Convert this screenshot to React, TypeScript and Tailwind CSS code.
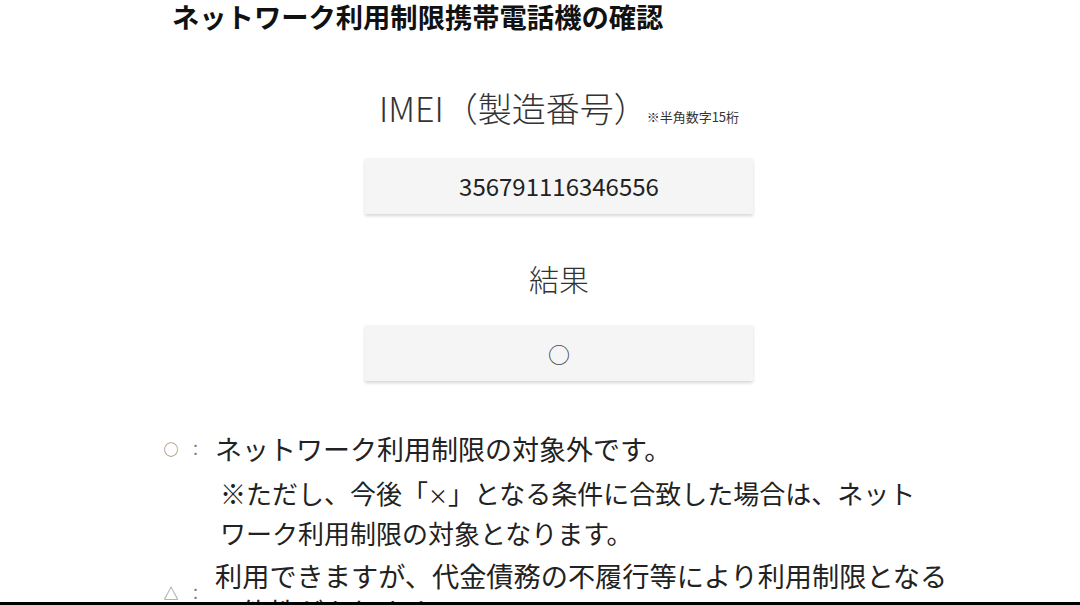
const jp = "font-['Noto_Sans_CJK_JP','Noto_Sans',sans-serif]";

function Field({ children }: { children: React.ReactNode }) {
  return (
    <div className="mx-auto flex h-[56px] w-[388px] items-center justify-center bg-[#f5f5f5] shadow-[0_2px_3px_rgba(0,0,0,0.16)]">
      {children}
    </div>
  );
}

function Mark({ sign }: { sign: string }) {
  return (
    <span className="flex w-[52px] shrink-0 items-center text-[15px] text-[#777]">
      <span className="w-[16px] text-center">{sign}</span>
      <span className="ml-[9px]">：</span>
    </span>
  );
}

export default function App() {
  return (
    <div className={`relative h-[605px] w-[1080px] overflow-hidden bg-white ${jp}`}>
      <div className="ml-[163px] w-[792px]">
        <h1 className="pl-[9px] text-[27.3px] font-bold leading-[34px] text-[#111] -mt-[1px]">
          ネットワーク利用制限携帯電話機の確認
        </h1>

        <div className="mt-[55px] flex items-baseline justify-center">
          <span className="text-[34px] leading-[40px] font-light text-[#333]">IMEI（製造番号）</span>
          <span className="-ml-[1px] text-[13px] text-[#333]">※半角数字15桁</span>
        </div>

        <div className="mt-[30px]">
          <Field>
            <span className="text-[24px] text-[#222]">356791116346556</span>
          </Field>
        </div>

        <p className="mt-[46px] text-center text-[30px] leading-[36px] font-light text-[#333]">結果</p>

        <div className="mt-[29px]">
          <Field>
            <span className="text-[22px] text-[#444]">○</span>
          </Field>
        </div>

        <div className="mt-[48px] flex items-center">
          <Mark sign="○" />
          <span className="text-[27px] leading-[40px] text-[#222]">ネットワーク利用制限の対象外です。</span>
        </div>
        <p className="mt-[4px] ml-[57px] w-[705px] text-[26px] leading-[40px] text-[#222]">
          ※ただし、今後「<span className="text-[20px] leading-none">×</span>」となる条件に合致した場合は、ネットワーク利用制限の対象となります。
        </p>

        <div className="mt-[4px] flex items-center">
          <Mark sign="△" />
          <span className="w-[740px] text-[27.2px] leading-[36px] text-[#222]">
            利用できますが、代金債務の不履行等により利用制限となる可能性があります。
          </span>
        </div>
      </div>

      <div className="absolute bottom-0 left-0 h-[3px] w-full bg-black" />
    </div>
  );
}
